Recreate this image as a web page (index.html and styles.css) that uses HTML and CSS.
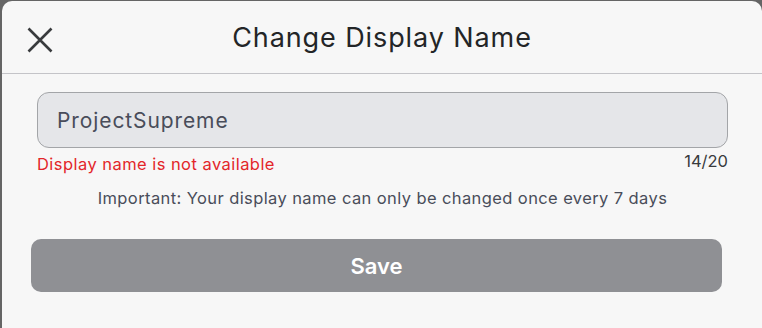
FILE: index.html
```html
<!DOCTYPE html>
<html>
<head>
<meta charset="utf-8">
<link rel="stylesheet" href="styles.css">
</head>
<body>
<div class="dialog">
  <div class="header">
    <button class="close" aria-label="Close">
      <svg width="26" height="26" viewBox="0 0 26 26"><path d="M1.5 1.5 L24.5 24.5 M24.5 1.5 L1.5 24.5" stroke="#393b3d" stroke-width="2.6" fill="none"/></svg>
    </button>
    <h1 class="title">Change Display Name</h1>
  </div>
  <div class="body">
    <div class="field">ProjectSupreme</div>
    <div class="meta">
      <span class="error">Display name is not available</span>
      <span class="count">14/20</span>
    </div>
    <p class="note">Important: Your display name can only be changed once every 7 days</p>
    <button class="save">Save</button>
  </div>
</div>
</body>
</html>
```
FILE: styles.css
```css
html, body {
  margin: 0;
  padding: 0;
  background: #656565;
  overflow: hidden;
  height: 328px;
}
body {
  font-family: Inter, "Noto Sans", sans-serif;
}
.dialog {
  margin: 1px 0 0 2px;
  width: 760px;
  height: 340px;
  background: #f7f7f7;
  border-radius: 10px;
}
.header {
  display: flex;
  align-items: center;
  height: 72px;
  border-bottom: 1px solid #c4c4c8;
}
.close {
  border: 0;
  background: none;
  padding: 0;
  margin: 6px 0 0 25px;
  width: 26px;
  height: 26px;
  display: flex;
}
.title {
  flex: 1;
  margin: 0;
  padding-right: 51px;
  text-align: center;
  font-weight: 400;
  font-size: 27px;
  color: #232527;
  letter-spacing: 0.9px;
}
.body {
  padding: 18px 34px 0 35px;
  display: flex;
  flex-direction: column;
}
.field {
  height: 54px;
  border: 1px solid #a3a5a8;
  border-radius: 12px;
  background: #e5e6e9;
  display: flex;
  align-items: center;
  padding-left: 19px;
  font-size: 21px;
  letter-spacing: 0.9px;
  color: #494d5a;
}
.meta {
  display: flex;
  justify-content: space-between;
  margin-top: 6px;
  font-size: 16.5px;
  line-height: 20px;
  letter-spacing: 0.45px;
}
.error {
  color: #e3262a;
}
.count {
  color: #393b3d;
  position: relative;
  top: -3px;
  letter-spacing: 0;
}
.note {
  margin: 14px 0 0 0;
  text-align: center;
  font-size: 16.5px;
  letter-spacing: 0.4px;
  color: #494d5a;
  line-height: 20px;
}
.save {
  margin: 31px 0 0 -6px;
  width: 691px;
  height: 53px;
  border: 0;
  border-radius: 10px;
  background: #8f9094;
  color: #fff;
  font-family: inherit;
  font-size: 22px;
  font-weight: 600;
}
```
